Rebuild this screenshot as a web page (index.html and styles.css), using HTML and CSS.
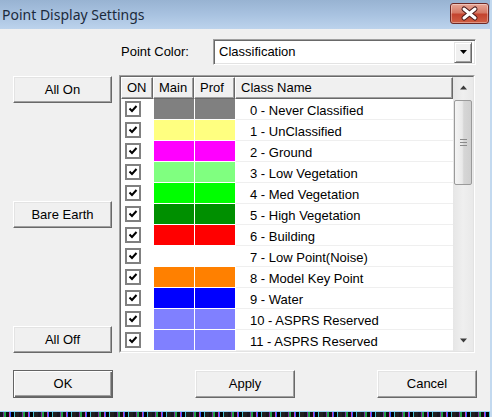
FILE: index.html
```html
<!DOCTYPE html>
<html>
<head>
<meta charset="utf-8">
<link rel="stylesheet" href="styles.css">
</head>
<body>
<div class="window">
  <div class="titlebar">
    <span class="title">Point Display Settings</span>
    <div class="close">
      <svg width="39" height="21" viewBox="0 0 39 21">
        <path d="M14 6 L25 15 M25 6 L14 15" stroke="#4a1a18" stroke-width="5" stroke-linecap="round"/>
        <path d="M14 6 L25 15 M25 6 L14 15" stroke="#ffffff" stroke-width="3" stroke-linecap="round"/>
      </svg>
    </div>
  </div>
  <div class="body">
    <div class="combo-row">
      <span class="label">Point Color:</span>
      <div class="combo">
        <span class="combo-text">Classification</span>
        <span class="drop"><svg width="9" height="5" viewBox="0 0 9 5"><path d="M1 0 H8 L4.5 4 Z" fill="#000"/></svg></span>
      </div>
    </div>
    <div class="main">
      <div class="side">
        <div class="btn">All On</div>
        <div class="btn">Bare Earth</div>
        <div class="btn">All Off</div>
      </div>
      <div class="list">
        <div class="frame">
          <div class="grid">
            <div class="header">
              <div class="hcell h-on">ON</div>
              <div class="hcell h-main">Main</div>
              <div class="hcell h-prof">Prof</div>
              <div class="hcell h-name">Class Name</div>
            </div>
            <div class="rows">
              <div class="row"><div class="on"><span class="cb"><svg width="10" height="10" viewBox="0 0 10 10"><path d="M1.5 4.5 L4 7 L8.5 2" stroke="#000" stroke-width="2" fill="none"/></svg></span></div><div class="sw" style="background:#808080"></div><div class="sw" style="background:#808080"></div><div class="name">0 - Never Classified</div></div>
              <div class="row"><div class="on"><span class="cb"><svg width="10" height="10" viewBox="0 0 10 10"><path d="M1.5 4.5 L4 7 L8.5 2" stroke="#000" stroke-width="2" fill="none"/></svg></span></div><div class="sw" style="background:#ffff80"></div><div class="sw" style="background:#ffff80"></div><div class="name">1 - UnClassified</div></div>
              <div class="row"><div class="on"><span class="cb"><svg width="10" height="10" viewBox="0 0 10 10"><path d="M1.5 4.5 L4 7 L8.5 2" stroke="#000" stroke-width="2" fill="none"/></svg></span></div><div class="sw" style="background:#ff00ff"></div><div class="sw" style="background:#ff00ff"></div><div class="name">2 - Ground</div></div>
              <div class="row"><div class="on"><span class="cb"><svg width="10" height="10" viewBox="0 0 10 10"><path d="M1.5 4.5 L4 7 L8.5 2" stroke="#000" stroke-width="2" fill="none"/></svg></span></div><div class="sw" style="background:#80ff80"></div><div class="sw" style="background:#80ff80"></div><div class="name">3 - Low Vegetation</div></div>
              <div class="row"><div class="on"><span class="cb"><svg width="10" height="10" viewBox="0 0 10 10"><path d="M1.5 4.5 L4 7 L8.5 2" stroke="#000" stroke-width="2" fill="none"/></svg></span></div><div class="sw" style="background:#00ff00"></div><div class="sw" style="background:#00ff00"></div><div class="name">4 - Med Vegetation</div></div>
              <div class="row"><div class="on"><span class="cb"><svg width="10" height="10" viewBox="0 0 10 10"><path d="M1.5 4.5 L4 7 L8.5 2" stroke="#000" stroke-width="2" fill="none"/></svg></span></div><div class="sw" style="background:#008f00"></div><div class="sw" style="background:#008f00"></div><div class="name">5 - High Vegetation</div></div>
              <div class="row"><div class="on"><span class="cb"><svg width="10" height="10" viewBox="0 0 10 10"><path d="M1.5 4.5 L4 7 L8.5 2" stroke="#000" stroke-width="2" fill="none"/></svg></span></div><div class="sw" style="background:#ff0000"></div><div class="sw" style="background:#ff0000"></div><div class="name">6 - Building</div></div>
              <div class="row"><div class="on"><span class="cb"><svg width="10" height="10" viewBox="0 0 10 10"><path d="M1.5 4.5 L4 7 L8.5 2" stroke="#000" stroke-width="2" fill="none"/></svg></span></div><div class="sw" style="background:#ffffff"></div><div class="sw" style="background:#ffffff"></div><div class="name">7 - Low Point(Noise)</div></div>
              <div class="row"><div class="on"><span class="cb"><svg width="10" height="10" viewBox="0 0 10 10"><path d="M1.5 4.5 L4 7 L8.5 2" stroke="#000" stroke-width="2" fill="none"/></svg></span></div><div class="sw" style="background:#ff8000"></div><div class="sw" style="background:#ff8000"></div><div class="name">8 - Model Key Point</div></div>
              <div class="row"><div class="on"><span class="cb"><svg width="10" height="10" viewBox="0 0 10 10"><path d="M1.5 4.5 L4 7 L8.5 2" stroke="#000" stroke-width="2" fill="none"/></svg></span></div><div class="sw" style="background:#0000ff"></div><div class="sw" style="background:#0000ff"></div><div class="name">9 - Water</div></div>
              <div class="row"><div class="on"><span class="cb"><svg width="10" height="10" viewBox="0 0 10 10"><path d="M1.5 4.5 L4 7 L8.5 2" stroke="#000" stroke-width="2" fill="none"/></svg></span></div><div class="sw" style="background:#8080ff"></div><div class="sw" style="background:#8080ff"></div><div class="name">10 - ASPRS Reserved</div></div>
              <div class="row"><div class="on"><span class="cb"><svg width="10" height="10" viewBox="0 0 10 10"><path d="M1.5 4.5 L4 7 L8.5 2" stroke="#000" stroke-width="2" fill="none"/></svg></span></div><div class="sw" style="background:#8080ff"></div><div class="sw" style="background:#8080ff"></div><div class="name">11 - ASPRS Reserved</div></div>
            </div>
          </div>
          <div class="vscroll">
            <div class="arrow"><svg width="9" height="5" viewBox="0 0 9 5"><path d="M4.5 0.5 L8 4.5 H1 Z" fill="#3c3c3c"/></svg></div>
            <div class="thumb"><span class="grip"></span></div>
            <div class="track"></div>
            <div class="arrow"><svg width="9" height="5" viewBox="0 0 9 5"><path d="M1 0.5 H8 L4.5 4.5 Z" fill="#3c3c3c"/></svg></div>
          </div>
        </div>
      </div>
    </div>
    <div class="actions">
      <div class="btn default">OK</div>
      <div class="btn">Apply</div>
      <div class="btn">Cancel</div>
    </div>
  </div>
  <div class="edge"></div>
  <div class="noise"></div>
</div>
</body>
</html>
```

FILE: styles.css
```css
html, body {
  margin: 0;
  padding: 0;
}
body {
  width: 492px;
  height: 417px;
  overflow: hidden;
  background: #f0f0f0;
  font-family: "Liberation Sans", Arial, sans-serif;
  font-size: 13px;
  color: #000;
}
.window {
  width: 490px;
  height: 417px;
  border-right: 2px solid #c3d9ef;
  display: flex;
  flex-direction: column;
  background: #f0f0f0;
}
.titlebar {
  height: 29px;
  flex: none;
  display: flex;
  justify-content: space-between;
  align-items: flex-start;
  background: linear-gradient(to bottom, #98b3d2 0%, #a8c2e0 50%, #bcd3ec 100%);
}
.title {
  font-family: "Noto Sans", "Open Sans", sans-serif;
  font-size: 14px;
  line-height: 29px;
  padding-left: 2px;
  color: #1b2a3c;
}
.close {
  margin-top: 3px;
  margin-right: 1px;
  width: 39px;
  height: 21px;
  box-sizing: border-box;
  border: 1px solid #6e2a26;
  border-radius: 3px;
  background: linear-gradient(to bottom, #e8a797 0%, #d57a66 45%, #c4442f 55%, #cf5f44 100%);
  box-shadow: inset 0 0 0 1px rgba(255,255,255,0.35);
  display: flex;
}
.close svg {
  margin: -1px;
}
.body {
  flex: 1;
  display: flex;
  flex-direction: column;
}
.combo-row {
  margin-top: 10px;
  display: flex;
  align-items: center;
  padding-left: 121px;
}
.label {
  width: 92px;
  line-height: 26px;
}
.combo {
  width: 263px;
  height: 26px;
  box-sizing: border-box;
  background: #fff;
  border: 1px solid;
  border-color: #a0a0a0 #ffffff #ffffff #a0a0a0;
  box-shadow: inset 1px 1px 0 #696969, inset -1px -1px 0 #e3e3e3;
  display: flex;
  align-items: center;
  justify-content: space-between;
  padding: 2px 3px 2px 5px;
}
.combo-text {
  line-height: 20px;
}
.drop {
  width: 18px;
  height: 21px;
  box-sizing: border-box;
  background: #f0f0f0;
  border: 1px solid;
  border-color: #e3e3e3 #696969 #696969 #e3e3e3;
  box-shadow: inset 1px 1px 0 #ffffff, inset -1px -1px 0 #a0a0a0;
  display: flex;
  align-items: center;
  justify-content: center;
}
.main {
  margin-top: 10px;
  display: flex;
  padding-left: 13px;
}
.side {
  width: 99px;
  height: 278px;
  padding-top: 1px;
  box-sizing: border-box;
  display: flex;
  flex-direction: column;
  justify-content: space-between;
}
.btn {
  height: 27px;
  box-sizing: border-box;
  border: 1px solid;
  border-color: #ffffff #696969 #696969 #ffffff;
  box-shadow: inset -1px -1px 0 #a0a0a0, inset 1px 1px 0 #e3e3e3;
  background: #f0f0f0;
  display: flex;
  align-items: center;
  justify-content: center;
  line-height: 16px;
}
.list {
  margin-left: 7px;
  width: 356px;
  height: 278px;
  box-sizing: border-box;
  border: 1px solid;
  border-color: #a0a0a0 #ffffff #ffffff #a0a0a0;
}
.frame {
  height: 100%;
  box-sizing: border-box;
  border: 1px solid;
  border-color: #696969 #e3e3e3 #e3e3e3 #696969;
  display: flex;
  background: #fff;
}
.grid {
  width: 332px;
  display: flex;
  flex-direction: column;
}
.header {
  height: 22px;
  display: grid;
  grid-template-columns: 32px 41px 41px 218px;
  background: #f0f0f0;
}
.hcell {
  box-sizing: border-box;
  border: 1px solid;
  border-color: #ffffff #696969 #696969 #ffffff;
  box-shadow: inset -1px -1px 0 #a0a0a0;
  padding-left: 5px;
  line-height: 19px;
  white-space: nowrap;
  overflow: hidden;
}
.rows {
  display: flex;
  flex-direction: column;
}
.row {
  height: 21px;
  display: grid;
  grid-template-columns: 33px 40px 41px 218px;
  background: #fff;
}
.on {
  height: 20px;
  display: flex;
  align-items: center;
  padding-left: 4px;
}
.cb {
  width: 16px;
  height: 16px;
  box-sizing: border-box;
  border: 2px solid #808080;
  background: #fff;
  display: flex;
  align-items: center;
  justify-content: center;
}
.sw {
  height: 20px;
}
.row .sw:nth-child(3) {
  margin-left: 1px;
}
.name {
  height: 21px;
  box-sizing: border-box;
  border-bottom: 1px solid #efefef;
  margin-left: 1px;
  padding-left: 14px;
  padding-top: 2px;
  line-height: 19px;
  white-space: nowrap;
}
.vscroll {
  width: 20px;
  display: flex;
  flex-direction: column;
  align-items: center;
  background: linear-gradient(to right, #e6e6e6, #efefef 50%, #e9e9e9);
}
.arrow {
  height: 21px;
  width: 100%;
  display: flex;
  align-items: center;
  justify-content: center;
  flex: none;
}
.thumb {
  margin-top: 2px;
  width: 18px;
  height: 85px;
  box-sizing: border-box;
  border: 1px solid #9a9a9a;
  border-radius: 2px;
  background: linear-gradient(to right, #f4f4f4 0%, #e9e9e9 45%, #d6d6d6 55%, #cfcfcf 100%);
  display: flex;
  align-items: center;
  justify-content: center;
  flex: none;
}
.grip {
  width: 7px;
  height: 5px;
  border-top: 1px solid #8a8a8a;
  border-bottom: 1px solid #8a8a8a;
  background: linear-gradient(to bottom, transparent 2px, #8a8a8a 2px, #8a8a8a 3px, transparent 3px);
}
.track {
  flex: 1;
}
.actions {
  margin-top: 17px;
  display: flex;
  padding-left: 13px;
  gap: 82px;
}
.actions .btn {
  width: 100px;
  height: 28px;
}
.actions .btn.default {
  border: 1px solid #646464;
  box-shadow: inset 1px 1px 0 #ffffff, inset -1px -1px 0 #696969, inset -2px -2px 0 #a0a0a0;
}
.edge {
  height: 1px;
  margin-top: auto;
  background: #9fd4f4;
  flex: none;
}
.noise {
  height: 5px;
  flex: none;
  background: repeating-linear-gradient(90deg, #151520 0 3px, #7a2a9a 3px 4px, #1fa048 4px 6px, #0d0d0d 6px 9px, #c13ec8 9px 10px, #2f5fff 10px 11px, #000 11px 14px, #40c0d0 14px 15px, #202020 15px 19px);
}
```
